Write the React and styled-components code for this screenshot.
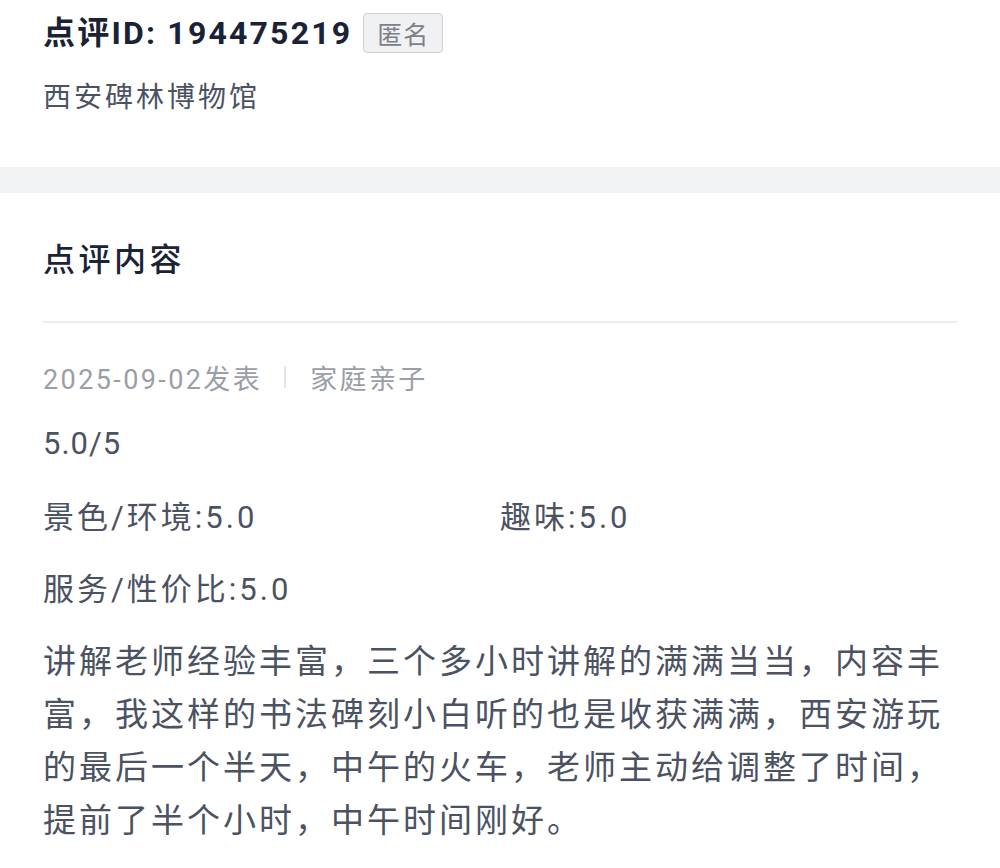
import React from "react";
import styled, { createGlobalStyle } from "styled-components";

const GlobalStyle = createGlobalStyle`
  html, body {
    margin: 0;
    padding: 0;
    background: #ffffff;
  }
  body {
    font-family: Roboto, "Noto Sans CJK SC", "Noto Sans", sans-serif;
    -webkit-font-smoothing: antialiased;
  }
`;

const Page = styled.div`
  width: 1000px;
  min-height: 868px;
  background: #ffffff;
`;

const TopCard = styled.section`
  box-sizing: border-box;
  height: 167px;
  padding: 13px 43px 0;
  background: #ffffff;
`;

const TitleRow = styled.div`
  display: flex;
  align-items: center;
  gap: 11px;
  height: 40px;
`;

const Title = styled.h1`
  margin: 0;
  font-size: 32px;
  line-height: 40px;
  font-weight: 700;
  letter-spacing: 2.2px;
  color: #1a2236;
`;

const Badge = styled.span`
  box-sizing: border-box;
  display: inline-flex;
  align-items: center;
  justify-content: center;
  width: 80px;
  height: 40px;
  border: 1px solid #cdcfd3;
  border-radius: 4px;
  background: #f0f1f3;
  color: #7c8189;
  font-size: 25px;
  letter-spacing: 1px;
`;

const Location = styled.div`
  margin-top: 25px;
  font-size: 28px;
  line-height: 40px;
  letter-spacing: 3px;
  color: #4b5262;
`;

const Band = styled.div`
  height: 26px;
  background: #f2f3f5;
`;

const ContentCard = styled.section`
  padding: 47px 43px 40px;
  background: #ffffff;
`;

const Heading = styled.h2`
  margin: 0;
  font-size: 32px;
  line-height: 40px;
  font-weight: 500;
  letter-spacing: 3.5px;
  color: #1b2337;
`;

const Divider = styled.hr`
  margin: 41px 0 0;
  border: none;
  height: 2px;
  background: #ebecee;
`;

const Meta = styled.div`
  display: flex;
  align-items: center;
  margin-top: 34px;
  height: 40px;
  font-size: 27px;
  letter-spacing: 2.4px;
  color: #9a9ea6;
`;

const Separator = styled.span`
  width: 2px;
  height: 22px;
  margin: 0 24px 0 22px;
  background: #e4e5e8;
`;

const Rating = styled.div`
  margin-top: 27px;
  font-size: 31px;
  line-height: 40px;
  letter-spacing: 1px;
  color: #4b5262;
`;

const ScoreGrid = styled.div`
  display: grid;
  grid-template-columns: 1fr 1fr;
  row-gap: 32px;
  margin-top: 34px;
`;

const Score = styled.div`
  font-size: 31px;
  line-height: 40px;
  letter-spacing: 3px;
  color: #4b5262;
`;

const Body = styled.p`
  margin: 25px 0 0;
  font-size: 33px;
  line-height: 53px;
  letter-spacing: 3px;
  color: #4b5262;
`;

const scores = ["景色/环境:5.0", "趣味:5.0", "服务/性价比:5.0"];

export default function App() {
  return (
    <Page>
      <GlobalStyle />
      <TopCard>
        <TitleRow>
          <Title>点评ID: 194475219</Title>
          <Badge>匿名</Badge>
        </TitleRow>
        <Location>西安碑林博物馆</Location>
      </TopCard>
      <Band />
      <ContentCard>
        <Heading>点评内容</Heading>
        <Divider />
        <Meta>
          <span>2025-09-02发表</span>
          <Separator />
          <span>家庭亲子</span>
        </Meta>
        <Rating>5.0/5</Rating>
        <ScoreGrid>
          {scores.map((s) => (
            <Score key={s}>{s}</Score>
          ))}
        </ScoreGrid>
        <Body>
          讲解老师经验丰富，三个多小时讲解的满满当当，内容丰富，我这样的书法碑刻小白听的也是收获满满，西安游玩的最后一个半天，中午的火车，老师主动给调整了时间，提前了半个小时，中午时间刚好。
        </Body>
      </ContentCard>
    </Page>
  );
}
